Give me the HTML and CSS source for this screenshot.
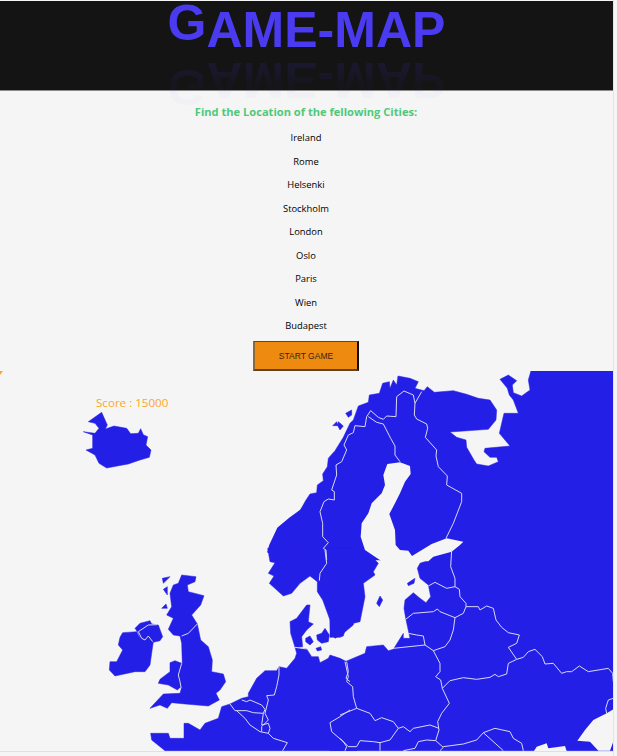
FILE: index.html
```html
<!DOCTYPE html>
<html lang="en">
<head>
<meta charset="utf-8">
<title>Game-Map</title>
<link rel="stylesheet" href="styles.css">
</head>
<body>
<div class="page">
  <header class="banner">
    <h1 class="logo"><span class="logo-g">G</span>AME-MAP</h1>
  </header>
  <main class="game">
    <h2 class="prompt">Find the Location of the fellowing Cities:</h2>
    <ul class="cities">
      <li>Ireland</li>
      <li>Rome</li>
      <li>Helsenki</li>
      <li>Stockholm</li>
      <li>London</li>
      <li>Oslo</li>
      <li>Paris</li>
      <li>Wien</li>
      <li>Budapest</li>
    </ul>
    <button class="start" type="button">START GAME</button>
    <div class="board">
      <span class="marker"></span>
      <span class="score">Score : 15000</span>
      <svg class="map" viewBox="0 371 613 380" width="613" height="380" aria-label="Map of Europe">
        <g class="land">
          <g transform="translate(0,330) scale(.33333)">
            <polygon points="265,275 305,247 322,285 316,297 342,288 380,295 392,311 415,310 422,296 430,314 443,320 438,345 453,360 448,382 420,390 385,402 352,408 320,414 297,400 285,375 258,360 278,355 278,315 250,305 285,310 297,295 285,280"/>
          </g>
          <polygon points="301,510 290,518 278,528 270,545 268,552 300,562 310,500"/>
          <g transform="translate(300,360) scale(.33333)">
            <polygon points="0,600 0,452 18,420 30,402 50,398 52,375 70,362 68,342 82,320 85,295 105,272 130,232 150,190 160,180 175,138 205,127 208,105 238,100 248,70 268,65 270,85 280,60 290,75 294,48 330,55 355,65 345,85 372,92 382,80 403,97 460,92 500,103 535,115 570,120 590,150 588,180 565,208 450,216 470,232 498,240 500,262 522,300 530,312 565,318 595,305 590,292 570,292 552,275 555,265 630,258 598,220 612,160 655,160 640,120 628,105 622,85 600,58 625,45 650,62 637,75 640,98 665,108 690,90 685,60 693,32 940,32 940,600"/>
            <polygon points="98,197 110,185 113,197"/>
            <polygon points="115,185 130,198 120,210 112,195"/>
            <polygon points="137,160 155,150 155,165 145,172"/>
          </g>
          <g transform="translate(80,550) scale(.33333)">
            <polygon points="563,-5 570,35 585,38 565,70 582,78 568,100 610,138 635,130 660,100 690,78 712,95 720,70 740,40 735,-5"/>
            <polygon points="735,-5 820,-5 820,225 790,250 765,265 752,250 750,210 728,150 712,125 712,95"/>
            <polygon points="630,215 650,205 680,165 690,165 685,215 700,222 680,240 665,260 668,290 645,292 632,250"/>
            <polygon points="677,265 690,258 700,275 690,285 677,275"/>
            <polygon points="710,255 725,250 735,235 748,255 745,275 725,280 712,270"/>
            <polygon points="708,295 722,290 725,300 712,303"/>
            <polygon points="645,292 680,297 695,320 715,320 720,338 745,325 750,315 780,325 800,335 830,335 830,602 255,602 215,570 212,550 265,550 270,565 312,565 312,520 325,520 360,540 375,520 415,505 425,470 450,462 485,445 505,440 505,430 530,385 555,362 590,362 597,350 620,355 645,325 650,310"/>
            <polygon points="128,248 170,245 178,262 195,270 205,258 220,275 215,310 210,345 195,365 165,365 105,378 88,360 90,335 110,335 128,300 115,285 120,262"/>
            <polygon points="165,235 180,220 210,212 215,222 235,225 248,260 240,272 220,277 205,260 195,270 180,265 175,250"/>
            <polygon points="305,75 348,80 345,95 322,105 325,125 372,137 362,165 335,195 352,222 362,270 385,290 397,330 395,365 430,372 437,395 420,420 408,430 418,450 385,468 315,462 275,458 262,475 240,465 210,475 250,432 300,430 305,412 295,390 307,345 305,280 300,258 280,255 265,238 280,205 260,195 275,170 270,130 280,105 295,100"/>
            <polygon points="270,338 285,332 305,340 318,345 320,400 303,412 292,420 265,405 235,400 240,388 270,365"/>
            <polygon points="247,85 270,80 250,100"/>
            <polygon points="250,118 262,110 262,135"/>
            <polygon points="245,175 258,162 262,175"/>
          </g>
          <g transform="translate(340,550) scale(.33333)">
            <polygon points="335,-5 335,5 240,40 232,55 240,85 265,105 272,140 258,158 240,145 220,128 195,150 192,175 197,205 210,265 190,265 190,250 160,298 145,302 130,285 80,290 75,310 15,335 0,328 -30,320 -30,602 820,602 820,-5"/>
            <polygon points="0,-5 70,-5 115,40 100,65 105,75 70,100 75,140 60,215 20,225 10,258 0,262 -30,262 -30,-5"/>
            <polygon points="110,160 120,138 128,150 118,170"/>
            <polygon points="202,100 225,85 222,100 205,107"/>
          </g>
        </g>
        <g class="sea" transform="translate(300,360) scale(.33333)">
          <polygon points="262,312 300,307 330,318 332,342 315,365 300,400 285,430 268,462 285,510 287,555 300,570 325,572 336,588 395,552 440,535 490,545 480,555 455,575 400,590 385,604 245,604 195,570 182,530 185,490 205,460 215,430 245,400 255,375 250,345"/>
        </g>
        <g class="sea" transform="translate(340,550) scale(.33333)">
          <polygon points="712,572 735,540 760,510 800,490 820,478 820,575 810,602 775,602 750,575"/>
          <polygon points="582,603 590,590 620,580 625,595 675,588 680,603"/>
        </g>
        <g class="borders">
          <g transform="translate(300,360) scale(.33333)">
            <path d="M80,600L78,570 70,565 85,548 68,530 68,490 60,455 72,425 85,417 103,420 103,395 95,390 110,345 108,315 125,305 140,270 132,255 145,225 160,218 165,197 195,200 200,170 212,152 235,172 250,178 260,168 288,170 290,110 312,93 340,105 345,130 365,95"/>
            <path d="M205,170L230,187 250,192 272,235 285,258 285,285 300,305"/>
            <path d="M345,130L343,165 350,177 380,192 383,205 376,232 410,270 408,288 415,320 442,348 440,375 485,400 485,425 460,490 438,535"/>
          </g>
          <g transform="translate(80,550) scale(.33333)">
            <path d="M735,0L740,40 720,70 718,92"/>
            <path d="M645,292L680,297"/>
            <path d="M175,245L185,265 195,270 205,258 218,275"/>
            <path d="M175,245L205,225 232,224"/>
            <path d="M352,222L325,250 305,258"/>
            <path d="M305,340L295,375 300,395 303,412 295,420"/>
            <path d="M597,350L597,375 590,410 583,435 560,437 565,450 555,490 565,510 545,530 545,545"/>
            <path d="M485,450L500,455 510,450 545,465 555,478 550,490"/>
            <path d="M450,462L465,482 500,482 520,488 550,490 545,525 565,520 570,535 565,550 540,545 510,525 495,505 470,482"/>
            <path d="M565,550L580,565 622,578 608,602"/>
            <path d="M810,480L780,500 750,518 755,545 790,575 800,590 795,602"/>
            <path d="M800,335L805,365 798,385 810,395"/>
          </g>
          <g transform="translate(340,550) scale(.33333)">
            <path d="M335,0L332,50 345,85 345,110"/>
            <path d="M265,108L285,97 320,115 345,110 358,118 360,140 378,160 378,170"/>
            <path d="M197,208L220,190 280,185 292,177 300,185 345,203 370,190 378,170"/>
            <path d="M378,170L415,170 420,180 440,168 460,175 468,210 485,232 505,248 538,255 530,280 505,292 530,328"/>
            <path d="M345,203L340,240 330,270 315,290 280,302"/>
            <path d="M255,285L250,258 230,255 205,250"/>
            <path d="M160,295L255,285 280,302 300,340 300,365 287,380 302,390 307,415"/>
            <path d="M307,415L330,392 370,383 410,388 450,382 465,373 475,380 500,372 505,340 530,328"/>
            <path d="M530,328L550,322 565,305 585,298 607,320 615,342 640,340 665,370 680,365 695,365 718,348 745,365 805,355 818,370 820,395"/>
            <path d="M307,415L328,460 305,490 293,515 297,540 287,572 310,592 300,602"/>
            <path d="M297,535L270,525 220,535 210,545 190,530 175,535 160,515 125,503 105,512 90,490 50,475 0,495"/>
            <path d="M15,335L25,380 20,395 38,410 40,440 50,475"/>
            <path d="M175,535L150,570 120,578 100,575 60,572 50,590 25,590 0,565"/>
            <path d="M120,578L120,602"/>
            <path d="M287,572L260,570 235,575 225,595 190,602"/>
            <path d="M310,590L370,582 410,570 430,548 465,535 510,545 520,565 545,580 550,602"/>
            <path d="M430,548L490,602"/>
            <path d="M820,445L805,450 797,475 800,490"/>
          </g>
        </g>
      </svg>
    </div>
  </main>
</div>
</body>
</html>
```
FILE: styles.css
```css
html, body {
  margin: 0;
  padding: 0;
  height: 100%;
  overflow: hidden;
  background: #f5f5f5;
}

.page {
  width: 613px;
  height: 756px;
  padding-top: 1px;
  box-sizing: border-box;
  font-family: "Open Sans", "Liberation Sans", sans-serif;
  box-shadow: 1px 0 0 #e4e4e4;
}

.banner {
  height: 89px;
  background: #141414;
  border-bottom: 1px solid #8a8a8a;
}

.logo {
  margin: 0;
  text-align: center;
  font: bold 50px/58px "Liberation Sans", Arial, sans-serif;
  color: #4a3bf0;
  -webkit-box-reflect: below -8px linear-gradient(rgba(255, 255, 255, 0.01), rgba(255, 255, 255, 0.04) 40%, rgba(255, 255, 255, 0.17));
}

.logo-g {
  display: inline-block;
  transform: translateY(-7px);
}

.game {
  display: flex;
  flex-direction: column;
  align-items: center;
  padding-right: 1px;
}

.prompt {
  margin: 12px 0 0;
  font-size: 11.1px;
  line-height: 17px;
  font-weight: 700;
  color: #4fc978;
}

.cities {
  margin: 11px 0 0;
  padding: 0;
  list-style: none;
  text-align: center;
  font-size: 9.4px;
  line-height: 14px;
  color: #000;
}

.cities li + li {
  margin-top: 9.5px;
}

.start {
  box-sizing: border-box;
  width: 106px;
  height: 30px;
  margin-top: 8px;
  background: #ee8a10;
  border-style: solid;
  border-width: 1px 2px 2px 2px;
  border-color: #5a4a30 #111 #5e4420 #8a6a3a;
  font: 8.5px "Liberation Sans", Arial, sans-serif;
  color: #33260f;
  padding: 0;
}

.board {
  position: relative;
  align-self: flex-start;
  width: 613px;
  height: 380px;
  border-bottom: 1px solid #e0e0e0;
}

.map {
  display: block;
}

.land {
  fill: #241fe6;
  stroke: #241fe6;
  stroke-width: 1.5;
  stroke-linejoin: round;
}

.sea {
  fill: #f5f5f5;
}

.borders {
  fill: none;
  stroke: #d9d9f6;
  stroke-width: 3;
  stroke-linejoin: round;
}

.score {
  position: absolute;
  left: 96px;
  top: 23px;
  font-size: 11.6px;
  line-height: 18px;
  color: #ffa51f;
}

.marker {
  position: absolute;
  left: 0;
  top: 0;
  border-top: 4px solid #ffa51f;
  border-right: 3px solid transparent;
}
```
